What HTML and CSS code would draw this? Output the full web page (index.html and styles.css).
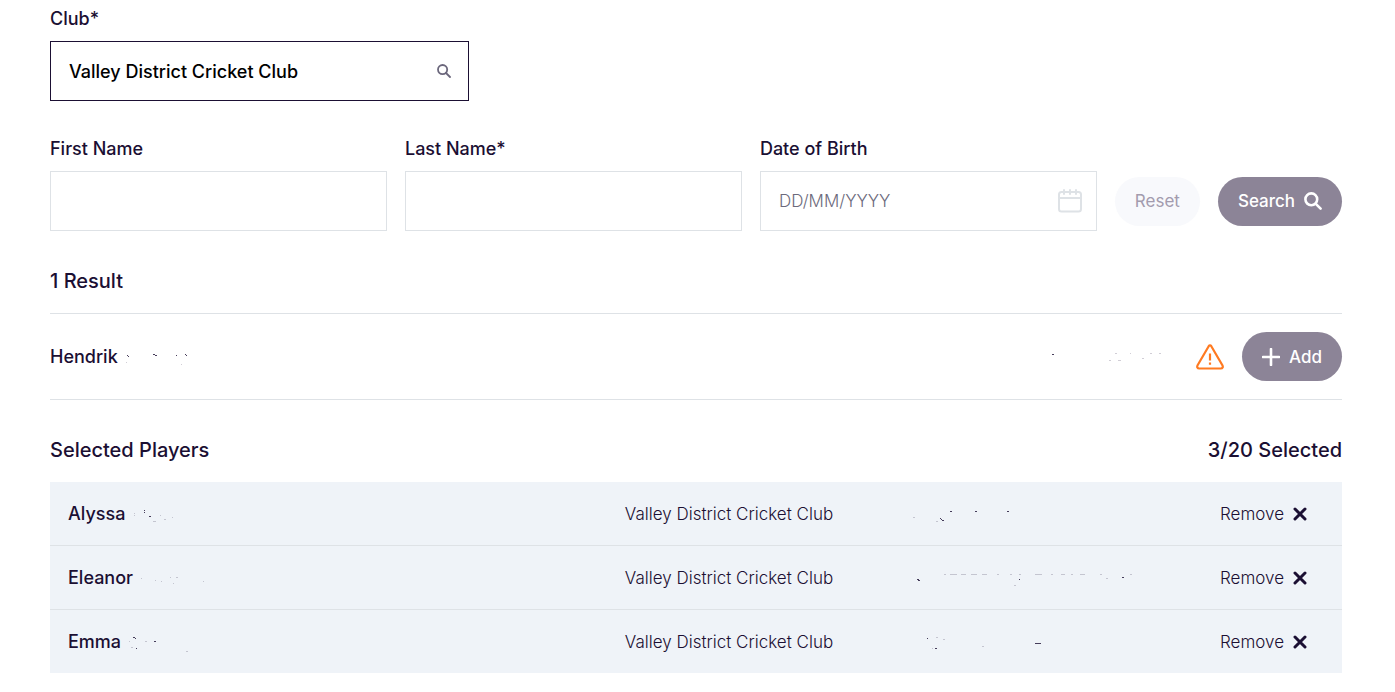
FILE: index.html
```html
<!DOCTYPE html>
<html lang="en">
<head>
  <meta charset="UTF-8">
  <meta name="viewport" content="width=device-width, initial-scale=1.0">
  <title>Select Players</title>
  <link rel="stylesheet" href="styles.css">
</head>
<body>
  <main class="page">
    <form>
      <div class="field club">
        <label for="club">Club*</label>
        <div class="control">
          <input type="text" id="club" class="filled" value="Valley District Cricket Club">
          <svg class="icon-club" viewBox="0 0 14 14" aria-hidden="true"><circle cx="5.6" cy="5.6" r="4.6"/><path d="M9 9l4 4"/></svg>
        </div>
      </div>

      <div class="search-row">
        <div class="field">
          <label for="first-name">First Name</label>
          <input type="text" id="first-name">
        </div>
        <div class="field">
          <label for="last-name">Last Name*</label>
          <input type="text" id="last-name">
        </div>
        <div class="field">
          <label for="dob">Date of Birth</label>
          <div class="control">
            <input type="text" id="dob" placeholder="DD/MM/YYYY">
            <svg class="icon-calendar" viewBox="0 0 24 24" aria-hidden="true"><rect x="1" y="3" width="22" height="19.5" rx="2.5"/><path d="M1 9h22M6 1v4M12 1v4M18 1v4"/></svg>
          </div>
        </div>
        <div class="actions">
          <button type="reset" class="btn btn-light">Reset</button>
          <button type="button" class="btn btn-dark">Search
            <svg class="icon-search" viewBox="0 0 18 18" aria-hidden="true"><circle cx="7.3" cy="7.3" r="5.9"/><path d="M11.8 11.8l4.8 4.8"/></svg>
          </button>
        </div>
      </div>
    </form>

    <h2 class="heading">1 Result</h2>
    <div class="result">
      <span class="name">Hendrik</span>
      <svg class="specks specks-result" viewBox="0 0 70 16" aria-hidden="true"><path d="M5 6h1M6 7h1M31 5h2M33 6h2M54 6h1M63 5h1M64 6h1"/><path class="soft" d="M4 13h1M59 15h1"/></svg>
      <svg class="specks specks-end" viewBox="0 0 130 16" aria-hidden="true"><path d="M4 5h2"/><path class="soft" d="M67 4h2M61 11h2M70 11h3M82 4h1M94 9h2M102 4h2M111 4h2"/></svg>
      <svg class="icon-warning" viewBox="0 0 28 26" role="img" aria-label="Warning"><path d="M12.7 2.2L1.600 21.300C.7 22.900 1.400 24.500 3.200 24.500h21.600c1.800 0 2.500-1.600 1.600-3.200L15.300 2.200c-.7-1.100-1.900-1.100-2.600 0z"/><path class="mark" d="M14 9.500v7M14 18.600v2.200"/></svg>
      <button type="button" class="btn btn-dark">
        <svg class="icon-plus" viewBox="0 0 18 18" aria-hidden="true"><path d="M9 1v16M1 9h16"/></svg>
        Add
      </button>
    </div>

    <div class="heading-row">
      <h2 class="heading">Selected Players</h2>
      <span class="heading">3/20 Selected</span>
    </div>
    <table class="players">
      <tbody>
        <tr>
          <td class="col-name"><span class="name">Alyssa</span> <svg class="specks" viewBox="0 0 70 16" aria-hidden="true"><path class="soft" d="M4 6h1M4 8h1M30 8h1M34 12h2M42 10h1M23 14h3"/><path d="M14 3h1M14 5h1M19 9h2"/></svg></td>
          <td class="col-club">Valley District Cricket Club</td>
          <td class="col-info"><svg class="specks specks-info" viewBox="0 0 240 16" aria-hidden="true"><path d="M40 4h2M65 4h2M97 4h2M30 11h1M31 12h1M32 13h2"/><path class="soft" d="M3 10h2M26 14h2"/></svg></td>
          <td class="col-remove"><button type="button" class="remove">Remove <svg viewBox="0 0 14 14" aria-hidden="true"><path d="M2 2l10 10M12 2L2 12"/></svg></button></td>
        </tr>
        <tr>
          <td class="col-name"><span class="name">Eleanor</span> <svg class="specks" viewBox="0 0 70 16" aria-hidden="true"><path class="soft" d="M3 7h1M17 9h1M23 10h1M32 6h1M38 6h2M35 12h1M65 10h1"/></svg></td>
          <td class="col-club">Valley District Cricket Club</td>
          <td class="col-info"><svg class="specks specks-info" viewBox="0 0 240 16" aria-hidden="true"><path d="M7 8h2M8 9h2M109 8h1M212 6h2"/><path class="soft" d="M34 3h2M40 3h7M51 3h5M61 3h6M72 3h5M87 3h2M100 3h2M109 3h2M125 3h7M141 3h2M151 3h4M161 3h2M170 3h5M190 3h2M196 7h2M220 3h2M104 14h2"/></svg></td>
          <td class="col-remove"><button type="button" class="remove">Remove <svg viewBox="0 0 14 14" aria-hidden="true"><path d="M2 2l10 10M12 2L2 12"/></svg></button></td>
        </tr>
        <tr>
          <td class="col-name"><span class="name">Emma</span> <svg class="specks" viewBox="0 0 70 16" aria-hidden="true"><path d="M7 2h2M9 3h1M10 13h1M28 6h2"/><path class="soft" d="M3 6h1M5 12h2M19 6h2M60 16h2"/></svg></td>
          <td class="col-club">Valley District Cricket Club</td>
          <td class="col-info"><svg class="specks specks-info" viewBox="0 0 240 16" aria-hidden="true"><path d="M125 8h6M17 3h1M25 13h2"/><path class="soft" d="M26 2h2M33 4h2M22 13h1M72 11h2"/></svg></td>
          <td class="col-remove"><button type="button" class="remove">Remove <svg viewBox="0 0 14 14" aria-hidden="true"><path d="M2 2l10 10M12 2L2 12"/></svg></button></td>
        </tr>
      </tbody>
    </table>
  </main>
</body>
</html>
```
FILE: styles.css
```css
:root {
  --ink: #1b0f33;
  --line: #dee2e6;
  --muted: #8c8497;
  --row: #eff3f8;
}
* {
  box-sizing: border-box;
  margin: 0;
  padding: 0;
}
body {
  font-family: 'Inter', sans-serif;
  font-size: 17px;
  font-weight: 300;
  line-height: 24px;
  color: var(--ink);
  background: #fff;
}
.page {
  padding: 7px 53px 18px 50px;
}
svg {
  display: block;
  flex: none;
  fill: none;
  stroke: currentColor;
  stroke-linecap: round;
  stroke-linejoin: round;
}
label {
  display: block;
  margin-bottom: 10px;
  font-size: 18px;
  font-weight: 500;
}
input {
  display: block;
  width: 100%;
  height: 60px;
  padding: 0 18px;
  border: 1px solid var(--line);
  background: #fff;
  font: inherit;
  color: #000;
}
input::placeholder {
  color: #6c6a7c;
  opacity: 1;
}
.filled {
  border-color: var(--ink);
  font-size: 18px;
  font-weight: 500;
}
.control {
  position: relative;
}
.control svg {
  position: absolute;
  top: 50%;
  transform: translateY(-50%);
}
.club {
  max-width: 419px;
  margin-bottom: 36px;
}
.icon-club {
  right: 18px;
  width: 14px;
  height: 14px;
  color: #6b677c;
  stroke-width: 1.8;
}
.icon-calendar {
  right: 15px;
  width: 24px;
  height: 24px;
  color: var(--line);
  stroke-width: 2;
}
.search-row {
  display: flex;
  align-items: flex-end;
  gap: 18px;
}
.search-row .field {
  flex: 1;
}
.actions {
  display: flex;
  align-items: center;
  gap: 18px;
  height: 60px;
}

/* buttons */
.btn {
  display: flex;
  align-items: center;
  gap: 9px;
  height: 49px;
  padding: 0 20px;
  border: none;
  border-radius: 25px;
  font: inherit;
  font-weight: 500;
  cursor: pointer;
}
.btn-dark {
  background: var(--muted);
  color: #fff;
}
.btn-light {
  background: #f8f9fc;
  color: #a39cae;
  font-weight: 400;
}
.icon-search,
.icon-plus {
  width: 18px;
  height: 18px;
  stroke-width: 2.6;
}

/* results */
.heading {
  font-size: 20px;
  line-height: 28px;
  font-weight: 500;
  margin: 36px 0 18px;
}
.name {
  font-size: 18px;
  font-weight: 500;
}
.result {
  display: flex;
  align-items: center;
  padding: 18px 0;
  border-top: 1px solid var(--line);
  border-bottom: 1px solid var(--line);
}
.icon-warning {
  width: 28px;
  height: 26px;
  margin-right: 18px;
  color: #ff7a21;
  stroke-width: 2.2;
}
.icon-warning .mark {
  stroke-linecap: butt;
}
.heading-row {
  display: flex;
  justify-content: space-between;
}

/* selected players */
.players {
  width: 100%;
  table-layout: fixed;
  border-collapse: separate;
  border-spacing: 0;
  background: var(--row);
}
.players td {
  height: 64px;
  padding: 0 18px;
  border-bottom: 1px solid var(--line);
  vertical-align: middle;
}
.players tr:last-child td {
  height: 63px;
  border-bottom: none;
}
.col-name {
  width: 43.1%;
}
.col-club,
.col-info {
  width: 22.1%;
}
.players .col-remove {
  padding-right: 35px;
}
.remove {
  display: flex;
  align-items: center;
  gap: 9px;
  margin-left: auto;
  border: none;
  background: none;
  font: inherit;
  color: var(--ink);
  cursor: pointer;
}
.remove svg {
  width: 14px;
  height: 14px;
  stroke-width: 3;
}

/* faint remains of hidden details */
.specks {
  display: inline-block;
  width: 70px;
  height: 16px;
  vertical-align: middle;
  stroke-width: 1;
  stroke-linecap: butt;
  shape-rendering: crispEdges;
  overflow: visible;
  opacity: 0.8;
}
.specks .soft {
  opacity: 0.25;
}
.specks-result {
  margin-left: 4px;
}
.specks-end {
  width: 130px;
  margin-left: auto;
  margin-right: 18px;
}
.specks-info {
  width: 240px;
}
```
